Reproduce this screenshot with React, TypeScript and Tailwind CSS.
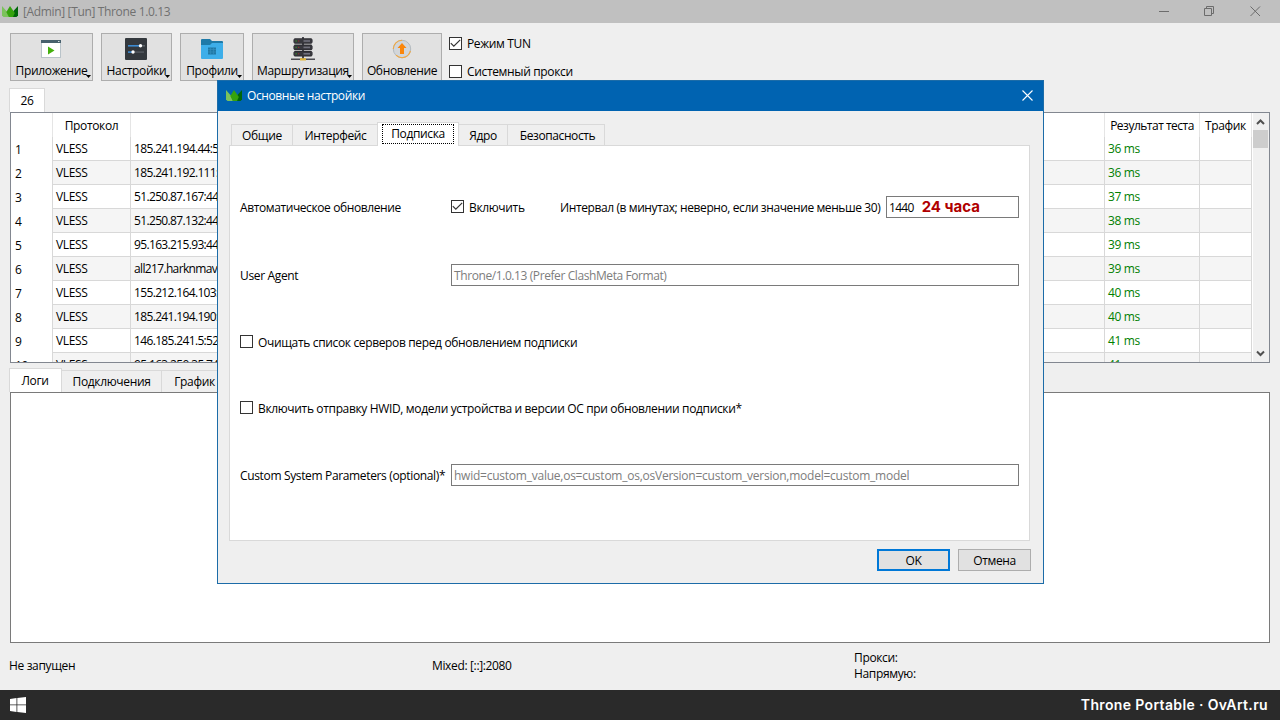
import type { ReactNode } from 'react';

const servers = [
  ['185.241.194.44:5', '36 ms'],
  ['185.241.192.111:', '36 ms'],
  ['51.250.87.167:44', '37 ms'],
  ['51.250.87.132:44', '38 ms'],
  ['95.163.215.93:44', '39 ms'],
  ['all217.harknmav', '39 ms'],
  ['155.212.164.103:', '40 ms'],
  ['185.241.194.190:', '40 ms'],
  ['146.185.241.5:52', '41 ms'],
  ['95.163.250.35:74', '41 ms'],
];

const cellStyles = ['', 'tracking-[-0.65px]', 'text-[#008000]', ''];

function Crown({ className = '' }: { className?: string }) {
  return (
    <svg viewBox="0 0 16 11" className={`h-[11px] w-4 shrink-0 ${className}`}>
      <path d="M0 0L4.8 5.5L7 11H1.5L0 9.5Z" fill="#7cc35c" />
      <path d="M16 0V9.5L14.5 11H9.5L11.5 5Z" fill="#00660a" />
      <path d="M8 0L12.8 7L11 11H6.8L4.3 6Z" fill="#35a30d" />
    </svg>
  );
}

function Check({ checked = false, className = '' }: { checked?: boolean; className?: string }) {
  return (
    <span className={`flex size-[13px] shrink-0 items-center justify-center border border-[#333] bg-white ${className}`}>
      {checked && (
        <svg viewBox="0 0 11 11" className="size-[11px]" fill="none" stroke="#333" strokeWidth="1.2">
          <path d="M.8 5.2L3.8 8.2L10.2 1.8" />
        </svg>
      )}
    </span>
  );
}

function ToolButton({ className, label, menu = true, children }: { className: string; label: string; menu?: boolean; children: ReactNode }) {
  return (
    <button className={`relative flex h-12 shrink-0 flex-col items-center border border-[#adadad] bg-[#e1e1e1] pt-[3px] ${className}`}>
      <span className="-ml-px flex h-6 items-center justify-center">{children}</span>
      <span className="mt-[2px] leading-4 whitespace-nowrap">{label}</span>
      {menu && (
        <svg viewBox="0 0 5 3" className="absolute right-[1px] bottom-[2px] h-[3px] w-[5px]">
          <path d="M0 0H5L2.5 3Z" fill="#000" />
        </svg>
      )}
    </button>
  );
}

function WindowIcon() {
  return (
    <svg viewBox="0 0 20 18" className="h-[18px] w-5">
      <rect width="20" height="18" fill="#b9c3c9" />
      <rect x="1" y="3" width="18" height="14" fill="#fff" />
      <rect width="20" height="3" fill="#47606d" />
      <rect x="17" y="1" width="1.5" height="1" fill="#d7e0e4" />
      <path d="M7 6.5L13.5 10.5L7 14.5Z" fill="#45b00d" />
    </svg>
  );
}

function SlidersIcon() {
  return (
    <svg viewBox="0 0 22 22" className="size-[22px]">
      <rect width="22" height="22" rx="1" fill="#33383d" />
      <rect x="3" y="7" width="13" height="1.6" fill="#3c8ad0" />
      <rect x="17" y="7" width="3" height="1.6" fill="#5b6268" />
      <circle cx="15.5" cy="7.8" r="1.7" fill="#fff" />
      <rect x="3" y="13.3" width="5" height="1.6" fill="#3c8ad0" />
      <rect x="9" y="13.3" width="10" height="1.6" fill="#50565c" />
      <circle cx="8" cy="14" r="1.7" fill="#fff" />
    </svg>
  );
}

function FolderIcon() {
  return (
    <svg viewBox="0 0 22 20" className="h-5 w-[22px]">
      <path d="M0 1Q0 0 1 0H9L11 2H21Q22 2 22 3V10H0Z" fill="#1e7aa8" />
      <path d="M0 6H9L11 4H22V19Q22 20 21 20H1Q0 20 0 19Z" fill="#3daee9" />
      <path d="M7 8.5H15V15.5H7Z" fill="#1f79a6" />
      <path d="M9.5 8.5V15.5M12.5 8.5V15.5M7 10.5H15M7 13H15" stroke="#3591c1" strokeWidth=".6" />
    </svg>
  );
}

function ServerIcon() {
  return (
    <svg viewBox="0 0 24 24" className="size-6">
      <rect x="11" y="0" width="2" height="22" fill="#4b4b50" />
      {[1.2, 7.6, 14].map((y) => (
        <g key={y}>
          <rect x="3" y={y} width="18" height="5.6" rx="1" fill="#29292e" />
          <rect x="2.4" y={y + 0.8} width="19.2" height="4" rx="1" fill="#37373d" />
          <rect x="4.5" y={y + 2.2} width="1.3" height="1.2" fill="#3b8a2b" />
          <rect x="7" y={y + 2.2} width="1.3" height="1.2" fill="#8d322b" />
          <rect x="12.5" y={y + 2} width="6.5" height="1.6" fill="#70707c" />
        </g>
      ))}
      <rect x="0" y="21.5" width="24" height="1.5" fill="#4d4d52" />
      <rect x="9" y="21.2" width="6" height="2.3" fill="#e0b63c" />
    </svg>
  );
}

function UpdateIcon() {
  return (
    <svg viewBox="0 0 20 20" className="size-5">
      <circle cx="10" cy="10" r="8.7" fill="#d2d6da" stroke="#b3babf" strokeWidth="1" />
      <path d="M1.3 10A8.7 8.7 0 0 1 10 1.3M4 16.2A8.7 8.7 0 0 0 10 18.7A8.7 8.7 0 0 0 18.4 12" fill="none" stroke="#f3a83e" strokeWidth="1.1" />
      <path d="M10 4L14.5 9H12V15H8V9H5.5Z" fill="#fa860b" />
    </svg>
  );
}

function Tab({ className, children }: { className: string; children: ReactNode }) {
  return <div className={`flex shrink-0 items-center justify-center border-[#d9d9d9] whitespace-nowrap ${className}`}>{children}</div>;
}

function Field({ className, children }: { className: string; children: ReactNode }) {
  return <div className={`flex h-[22px] items-center border border-[#7a7a7a] bg-white pl-[2px] whitespace-nowrap ${className}`}>{children}</div>;
}

function ServerTable() {
  return (
    <div className="mx-[10px] flex h-[251px] shrink-0 overflow-hidden border border-[#828790] bg-white">
      <div className="w-[1241px] shrink-0">
        <div className="grid h-6 grid-cols-[42px_78px_974px_95px_52px] text-center leading-[26px] whitespace-nowrap [&>div]:border-r [&>div]:border-[#e5e5e5]">
          <div />
          <div>Протокол</div>
          <div />
          <div className="tracking-[-0.5px]">Результат теста</div>
          <div>Трафик</div>
        </div>
        {servers.map(([address, ping], i) => (
          <div key={address} className="grid h-6 grid-cols-[42px_78px_974px_95px_52px] leading-[23px] [&>div]:border-r [&>div]:border-[#d8d8d8]">
            <div className="pt-px pl-1">{i + 1}</div>
            {['VLESS', address, ping, ''].map((cell, column) => (
              <div key={column} className={`border-b pl-[3px] whitespace-nowrap ${i % 2 ? 'bg-[#f5f5f5]' : 'bg-white'} ${cellStyles[column]}`}>
                {cell}
              </div>
            ))}
          </div>
        ))}
      </div>
      <div className="ml-px flex w-4 flex-col items-start justify-between bg-[#f0f0f0]">
        <div className="w-[15px]">
          <svg viewBox="0 0 15 17" className="h-[17px] w-[15px]" fill="none" stroke="#505050" strokeWidth="2">
            <path d="M4 11L7.5 7.5L11 11" />
          </svg>
          <div className="h-[18px] bg-[#cdcdcd]" />
        </div>
        <svg viewBox="0 0 15 17" className="h-[17px] w-[15px]" fill="none" stroke="#505050" strokeWidth="2">
          <path d="M4 6.5L7.5 10L11 6.5" />
        </svg>
      </div>
    </div>
  );
}

function SettingsDialog() {
  return (
    <section className="absolute top-20 left-[217px] flex h-[504px] w-[827px] flex-col border border-[#1c6ca8] bg-[#efefef]">
      <header className="flex h-[30px] shrink-0 items-center bg-[#0063b1] pr-[10px] pl-2 text-white">
        <Crown className="-mt-px" />
        <span className="ml-[5px] tracking-[-0.4px]">Основные настройки</span>
        <svg viewBox="0 0 11 11" className="-mt-px ml-auto size-[11px]" stroke="#fff" strokeWidth="1.1">
          <path d="M.5 .5L10.5 10.5M10.5 .5L.5 10.5" />
        </svg>
      </header>
      <div className="mt-[11px] ml-[13px] flex h-[23px] items-end">
        <Tab className="h-[21px] w-[61px] border-t border-l pt-px">Общие</Tab>
        <Tab className="h-[21px] w-[85px] border-t border-l pt-px pl-px">Интерфейс</Tab>
        <Tab className="z-10 -mb-px h-6 w-[82px] border-x border-t bg-white pb-px">
          <span className="flex h-5 w-[72px] items-center justify-center border border-dotted border-black">Подписка</span>
        </Tab>
        <Tab className="h-[21px] w-[48px] border-t pt-px">Ядро</Tab>
        <Tab className="h-[21px] w-[98px] border-x border-t pt-px pl-[3px] tracking-[-0.4px]">Безопасность</Tab>
      </div>
      <div className="ml-[11px] flex h-[396px] w-[801px] flex-col border border-[#d9d9d9] bg-white px-[10px] whitespace-nowrap">
        <div className="mt-[50px] flex h-[22px] items-center">
          <span className="w-[211px] pt-px tracking-[-0.4px]">Автоматическое обновление</span>
          <label className="flex w-[109px] items-center gap-[5px]">
            <Check checked className="-mt-[2px]" />
            <span className="pt-px">Включить</span>
          </label>
          <span className="pt-px tracking-[-0.4px]">Интервал (в минутах; неверно, если значение меньше 30)</span>
          <Field className="ml-auto w-[133px]">
            <span className="pt-px tracking-[-0.7px]">1440</span>
            <span className="ml-2 font-['Inter'] text-[15px] font-bold tracking-normal text-[#b00000]">24 часа</span>
          </Field>
        </div>
        <div className="mt-[46px] flex h-[22px] items-center">
          <span className="w-[211px] pt-px">User Agent</span>
          <Field className="flex-1 pt-px tracking-[-0.41px] text-[#7d7d7d]">Throne/1.0.13 (Prefer ClashMeta Format)</Field>
        </div>
        <label className="mt-[45px] flex h-[22px] items-center gap-[5px]">
          <Check className="-mt-[2px]" />
          <span className="pt-px">Очищать список серверов перед обновлением подписки</span>
        </label>
        <label className="mt-11 flex h-[22px] items-center gap-[5px]">
          <Check className="-mt-[2px]" />
          <span className="pt-px">Включить отправку HWID, модели устройства и версии ОС при обновлении подписки*</span>
        </label>
        <div className="mt-[45px] flex h-[22px] items-center">
          <span className="w-[211px] pt-px">Custom System Parameters (optional)*</span>
          <Field className="flex-1 pt-px tracking-[-0.24px] text-[#7d7d7d]">hwid=custom_value,os=custom_os,osVersion=custom_version,model=custom_model</Field>
        </div>
      </div>
      <footer className="mt-2 flex justify-end gap-2 pr-3">
        <button className="h-[22px] w-[73px] border-2 border-[#0078d7] bg-[#e1e1e1] pt-px leading-[18px]">OK</button>
        <button className="h-[22px] w-[73px] border border-[#adadad] bg-[#e1e1e1] pt-px leading-5">Отмена</button>
      </footer>
    </section>
  );
}

export default function App() {
  return (
    <main className="relative flex h-[720px] w-[1280px] flex-col overflow-hidden bg-[#efefef] font-['Open_Sans','Noto_Sans',sans-serif] text-[12px] leading-4 tracking-[-0.35px] text-black">
      <header className="flex h-[23px] shrink-0 items-center bg-[#c0c0c0] pl-[2px] text-[#707070]">
        <Crown className="-mt-px" />
        <span className="ml-[5px]">[Admin] [Tun] Throne 1.0.13</span>
        <svg viewBox="0 0 103 12" className="mr-[19px] mb-[2px] ml-auto h-3 w-[103px]" fill="none" stroke="#6c6c6c">
          <path d="M1 6.5H11M46.5 3.5H53.5V10.5H46.5ZM48.5 3V1.5H55.5V8.5H54M92.5 1.5L102 11M102 1.5L92.5 11" />
        </svg>
      </header>

      <div className="flex h-[65px] shrink-0 gap-2 pt-[10px] pl-[10px]">
        <ToolButton className="w-[83px]" label="Приложение"><WindowIcon /></ToolButton>
        <ToolButton className="w-[71px]" label="Настройки"><SlidersIcon /></ToolButton>
        <ToolButton className="w-16" label="Профили"><FolderIcon /></ToolButton>
        <ToolButton className="w-[102px]" label="Маршрутизация"><ServerIcon /></ToolButton>
        <ToolButton className="w-20" label="Обновление" menu={false}><UpdateIcon /></ToolButton>
        <div className="-ml-px flex flex-col gap-3 pt-[3px]">
          <label className="flex items-center gap-[5px]"><Check checked className="-mt-[2px]" /><span>Режим TUN</span></label>
          <label className="flex items-center gap-[5px]"><Check className="-mt-[2px]" /><span>Системный прокси</span></label>
        </div>
      </div>

      <div className="flex h-6 shrink-0 pl-[9px]">
        <Tab className="w-9 border-x border-t bg-white">26</Tab>
      </div>
      <ServerTable />

      <div className="flex h-[29px] shrink-0 items-end pl-[9px]">
        <Tab className="h-6 w-[53px] border-x border-t bg-white pr-px">Логи</Tab>
        <Tab className="h-[22px] w-[99px] border-t">Подключения</Tab>
        <Tab className="h-[22px] w-[67px] border-x border-t">График</Tab>
      </div>
      <div className="mx-[10px] h-[251px] shrink-0 border border-[#7a7a7a] bg-white" />

      <div className="grid h-[47px] shrink-0 grid-cols-[423px_422px_1fr] items-center pb-[2px] pl-[9px]">
        <span>Не запущен</span>
        <span>Mixed: [::]:2080</span>
        <div>
          <div>Прокси:</div>
          <div>Напрямую:</div>
        </div>
      </div>

      <footer className="flex h-[30px] shrink-0 items-center justify-between bg-[#2a2a2a] pr-3 pl-[10px] text-white">
        <svg viewBox="0 0 16 16" className="size-4" fill="#fff">
          <path d="M0 2L6.5 1.1V7.4H0ZM7.3 1L16 0V7.4H7.3ZM0 8.3H6.5V15L0 14ZM7.3 8.3H16V16L7.3 15Z" />
        </svg>
        <span className="font-['Inter'] text-[14px] font-semibold tracking-[0.35px]">Throne Portable · OvArt.ru</span>
      </footer>

      <SettingsDialog />
    </main>
  );
}
